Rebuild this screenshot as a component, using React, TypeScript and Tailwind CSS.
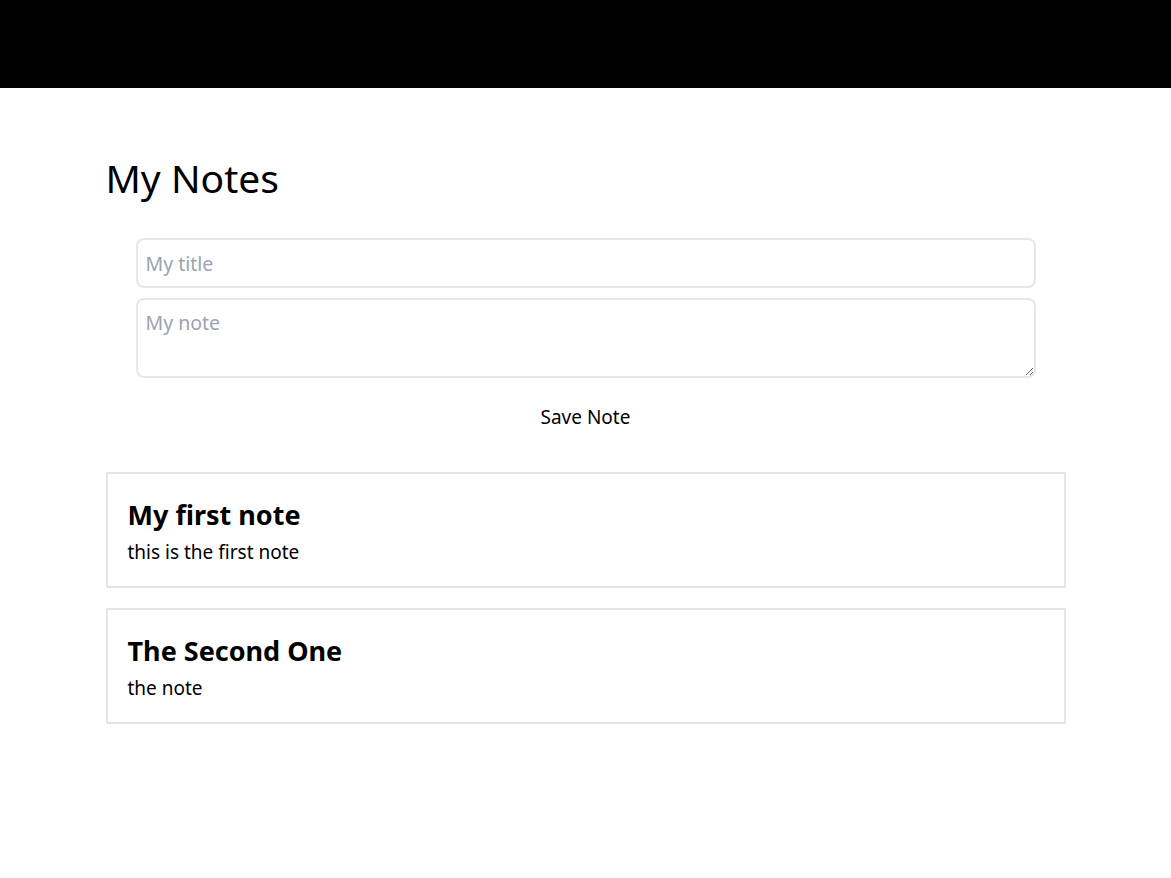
export default function App() {
  const notes = [
    { title: "My first note", body: "this is the first note" },
    { title: "The Second One", body: "the note" },
  ];

  return (
    <div className="min-h-screen bg-white text-black font-['Noto_Sans',sans-serif]">
      <header className="h-[88px] bg-black"></header>

      <main className="mx-auto w-[960px] pt-[66px]">
        <h1 className="text-[39px] leading-[48px]">My Notes</h1>

        <form className="mx-auto mt-[36px] flex w-[900px] flex-col">
          <input
            placeholder="My title"
            className="h-[50px] rounded-lg border-2 border-[#e5e7eb] px-2 text-[19.5px] outline-none placeholder:text-[#9ca3af]"
          />
          <textarea
            placeholder="My note"
            className="mt-[10px] h-[80px] rounded-lg border-2 border-[#e5e7eb] px-2 py-2 text-[19.5px] outline-none placeholder:text-[#9ca3af]"
          />
          <button type="button" className="mx-auto mt-[19px] h-[40px] px-2 text-[19px]">
            Save Note
          </button>
        </form>

        <div className="mt-[35px] flex flex-col gap-[20px]">
          {notes.map((n) => (
            <div key={n.title} className="h-[116px] border-2 border-[#e5e5e5] px-5 pt-[23px]">
              <h2 className="text-[27px] font-bold leading-[36px]">{n.title}</h2>
              <p className="mt-[5px] text-[19px] leading-[28px]">{n.body}</p>
            </div>
          ))}
        </div>
      </main>
    </div>
  );
}
